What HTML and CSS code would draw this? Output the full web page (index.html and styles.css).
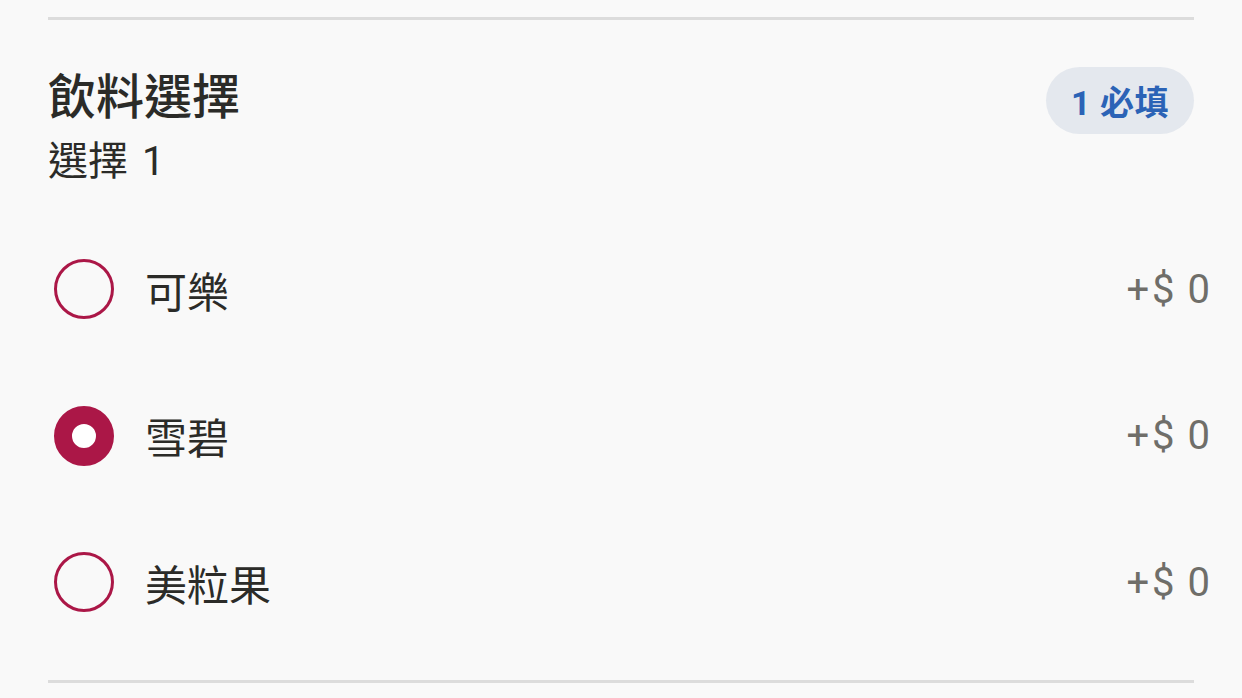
FILE: index.html
```html
<!DOCTYPE html>
<html lang="zh-Hant">
<head>
<meta charset="utf-8">
<title>飲料選擇</title>
<link rel="stylesheet" href="styles.css">
</head>
<body>
<section class="group">
  <div class="divider"></div>
  <header class="group-head">
    <div class="group-titles">
      <h2 class="group-title">飲料選擇</h2>
      <p class="group-sub">選擇 1</p>
    </div>
    <span class="badge">1 必填</span>
  </header>
  <ul class="options">
    <li class="option">
      <span class="radio"></span>
      <span class="option-name">可樂</span>
      <span class="option-price">+$ 0</span>
    </li>
    <li class="option">
      <span class="radio radio-on"></span>
      <span class="option-name">雪碧</span>
      <span class="option-price">+$ 0</span>
    </li>
    <li class="option">
      <span class="radio"></span>
      <span class="option-name">美粒果</span>
      <span class="option-price">+$ 0</span>
    </li>
  </ul>
  <div class="divider"></div>
</section>
</body>
</html>
```
FILE: styles.css
```css
html, body {
  margin: 0;
  padding: 0;
  background: #f9f9f9;
}
body {
  font-family: Roboto, "Noto Sans CJK TC", sans-serif;
  color: #2b2b28;
}
.group {
  padding: 17px 48px 0 48px;
  display: flex;
  flex-direction: column;
}
.divider {
  height: 3px;
  background: #dcdcdc;
}
.group-head {
  display: flex;
  justify-content: space-between;
  align-items: flex-start;
  padding-top: 47px;
}
.group-title {
  margin: 0;
  font-size: 48px;
  line-height: 62px;
  font-weight: 500;
  color: #2b2b28;
}
.group-sub {
  margin: 5px 0 0;
  font-size: 40px;
  line-height: 56px;
  color: #2b2b28;
  word-spacing: 4px;
}
.badge {
  display: inline-flex;
  align-items: center;
  height: 67px;
  padding: 0 25px;
  border-radius: 34px;
  background: #e4e8ee;
  color: #2b63b6;
  font-size: 34px;
  font-weight: 700;
  letter-spacing: 0.5px;
}
.options {
  list-style: none;
  margin: 26px -16px 0 0;
  padding: 0;
  display: flex;
  flex-direction: column;
}
.option {
  height: 146.5px;
  display: flex;
  align-items: center;
  gap: 31px;
  padding-left: 6px;
}
.radio {
  width: 54px;
  height: 54px;
  border: 3px solid #ab1747;
  border-radius: 50%;
  flex: none;
}
.radio-on {
  width: 24px;
  height: 24px;
  border: 18px solid #ab1747;
  background: #fff;
}
.option-name {
  flex: 1;
  font-size: 42px;
  color: #2b2b28;
}
.option-price {
  font-size: 40px;
  letter-spacing: 3px;
  word-spacing: -3px;
  margin-right: -3px;
  color: #6f6e69;
}
.group > .divider:last-child {
  margin-top: 24px;
}
```
